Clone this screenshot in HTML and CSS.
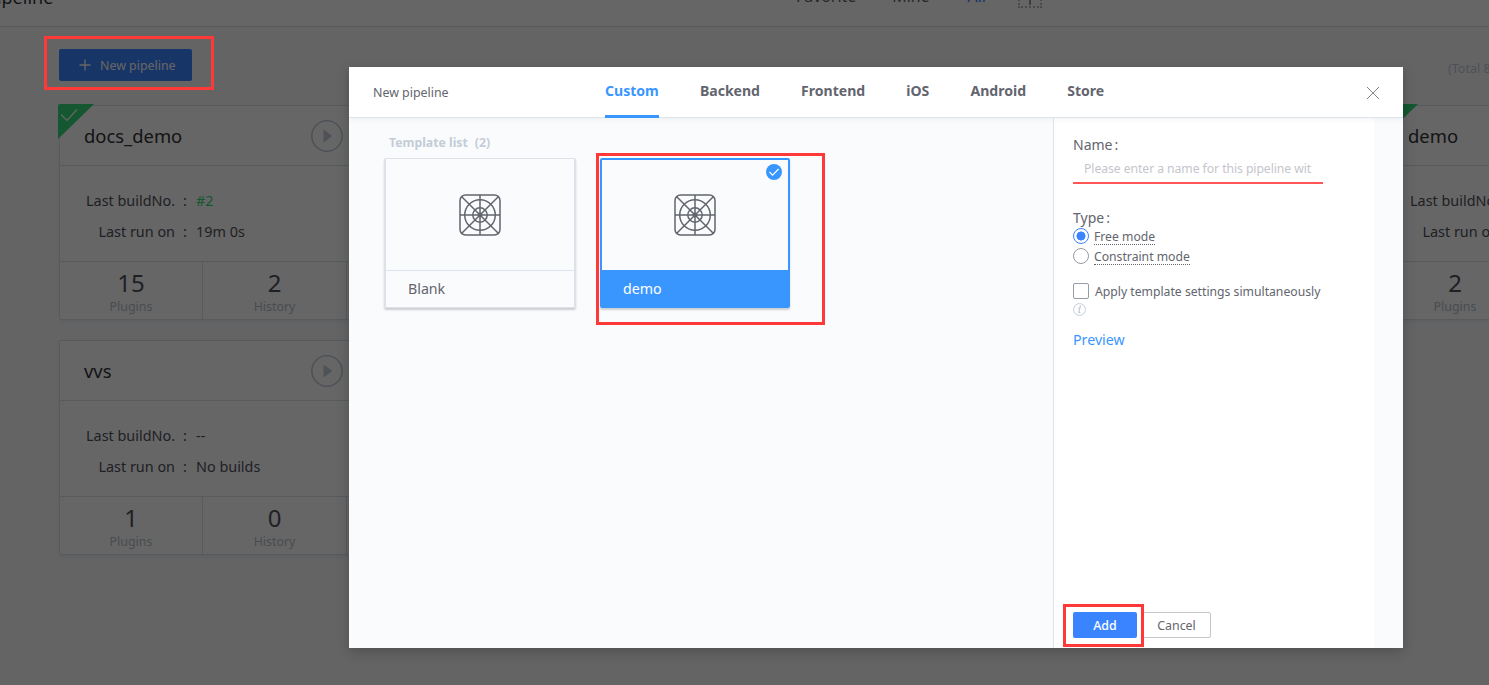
FILE: index.html
```html
<!DOCTYPE html>
<html lang="en">
<head>
<meta charset="utf-8">
<title>New pipeline</title>
<link rel="stylesheet" href="styles.css">
</head>
<body>
<svg class="defs" width="0" height="0">
  <symbol id="grid-icon" viewBox="0 0 42 42">
    <g fill="none" stroke="#63656e" stroke-width="1.5">
      <rect x="1" y="1" width="40" height="40" rx="5.5"/>
      <circle cx="21" cy="21" r="15.3"/>
      <circle cx="21" cy="21" r="7.2"/>
      <path d="M21 1v40M1 21h40M2.5 2.5l37 37M39.5 2.5l-37 37"/>
    </g>
    <circle cx="21" cy="21" r="2.4" fill="#63656e"/>
  </symbol>
  <symbol id="play-icon" viewBox="0 0 32 32">
    <circle cx="16" cy="16" r="15.2" fill="none" stroke="#c3cdd7" stroke-width="1.6"/>
    <path d="M12.5 10.2v11.6q0 .8.8.2l7.4-5.5q.6-.5 0-1L13.3 10q-.8-.6-.8.2z" fill="#c3cdd7"/>
  </symbol>
</svg>

<div class="page">
  <header class="topbar">
    <span class="topbar-title">Pipeline</span>
    <nav class="views">
      <span>Favorite</span><span>Mine</span><span class="view-active">All</span>
      <i class="view-add"></i>
    </nav>
  </header>
  <div class="toolbar">
    <button class="new-btn"><svg width="12" height="12" viewBox="0 0 12 12"><path d="M6 .5v11M.5 6h11" stroke="#fff" stroke-width="1.3"/></svg><span>New pipeline</span></button>
    <span class="total">(Total 8)</span>
  </div>
  <main class="cards">
    <section class="card">
      <svg class="corner" width="36" height="36" viewBox="0 0 36 36"><path d="M0 2q0-2 2-2h34L0 35z" fill="#34d97b"/><path d="M3 10.5l6 6 10-11" fill="none" stroke="#fff" stroke-width="1.2"/></svg>
      <div class="card-head"><h3>docs_demo</h3><svg class="play"><use href="#play-icon"/></svg></div>
      <dl class="card-body">
        <dt>Last buildNo.</dt><dd class="ok">#2</dd>
        <dt>Last run on</dt><dd>19m 0s</dd>
      </dl>
      <div class="card-foot"><div><b>15</b><span>Plugins</span></div><div><b>2</b><span>History</span></div><div></div></div>
    </section>
    <section class="card">
      <svg class="corner" width="36" height="36" viewBox="0 0 36 36"><path d="M0 2q0-2 2-2h34L0 35z" fill="#34d97b"/></svg>
      <div class="card-head"><h3>demo</h3></div>
      <dl class="card-body">
        <dt>Last buildNo.</dt><dd></dd>
        <dt>Last run on</dt><dd></dd>
      </dl>
      <div class="card-foot"><div><b>2</b><span>Plugins</span></div><div></div><div></div></div>
    </section>
    <section class="card">
      <div class="card-head"><h3>vvs</h3><svg class="play"><use href="#play-icon"/></svg></div>
      <dl class="card-body">
        <dt>Last buildNo.</dt><dd>--</dd>
        <dt>Last run on</dt><dd>No builds</dd>
      </dl>
      <div class="card-foot"><div><b>1</b><span>Plugins</span></div><div><b>0</b><span>History</span></div><div></div></div>
    </section>
  </main>
</div>

<div class="overlay">
  <div class="dialog">
    <header class="dialog-head">
      <span class="dialog-title">New pipeline</span>
      <nav class="tabs">
        <span class="tab-on">Custom</span><span>Backend</span><span>Frontend</span><span>iOS</span><span>Android</span><span>Store</span>
      </nav>
      <svg class="close" width="14" height="14" viewBox="0 0 14 14"><path d="M1 1l12 12M13 1L1 13" stroke="#8a8583" stroke-width="1"/></svg>
    </header>
    <div class="dialog-body">
      <section class="templates">
        <h4>Template list<span>(2)</span></h4>
        <div class="tiles">
          <div class="tile"><div class="tile-pic"><svg width="42" height="42"><use href="#grid-icon"/></svg></div><div class="tile-name">Blank</div></div>
          <div class="tile tile-on"><div class="tile-pic"><svg width="42" height="42"><use href="#grid-icon"/></svg></div><div class="tile-name">demo</div>
            <svg class="tick" width="16" height="16" viewBox="0 0 16 16"><circle cx="8" cy="8" r="8" fill="#3a96ff"/><path d="M3.5 8l3.1 3.2 6-6.2" fill="none" stroke="#fff" stroke-width="1.1"/></svg>
          </div>
        </div>
      </section>
      <aside class="form">
        <label class="label">Name<span class="colon">:</span></label>
        <div class="input"><span>Please enter a name for this pipeline within</span></div>
        <label class="label label-type">Type<span class="colon">:</span></label>
        <div class="option"><i class="radio radio-on"></i><span class="hint">Free mode</span></div>
        <div class="option"><i class="radio"></i><span class="hint">Constraint mode</span></div>
        <div class="option option-check"><i class="check"></i><span>Apply template settings simultaneously</span></div>
        <svg class="info" width="13" height="13" viewBox="0 0 13 13"><circle cx="6.5" cy="6.5" r="5.9" fill="none" stroke="#c3cdd7" stroke-width="1"/><path d="M5.2 5.3l1.7-.3-1.1 4.6q0 .5 1.5-.4" fill="none" stroke="#c3cdd7" stroke-width="1.2"/><circle cx="7.3" cy="3.4" r=".9" fill="#c3cdd7"/></svg>
        <a class="preview">Preview</a>
        <div class="actions"><button class="add">Add</button><button class="cancel">Cancel</button></div>
      </aside>
    </div>
  </div>
</div>

<div class="mark mark-new"></div>
<div class="mark mark-tile"></div>
<div class="mark mark-add"></div>
</body>
</html>
```
FILE: styles.css
```css
* { box-sizing: border-box; }
body { margin: 0; width: 1489px; height: 685px; overflow: hidden; position: relative; font: 14px "Noto Sans", "Open Sans", sans-serif; color: #63656e; }
.defs { position: absolute; }
h3, h4, dl, dd { margin: 0; font-weight: 400; }
button { font: inherit; border: 0; padding: 0; }
span, dt, dd, h3, a { white-space: nowrap; }

.page { height: 685px; background: #fafbfd; overflow: hidden; }
.topbar { height: 27px; background: #fff; border-bottom: 1px solid #dde4eb; display: flex; align-items: flex-start; line-height: 30px; }
.topbar-title { margin: -18px 0 0 -14px; width: 810px; font-size: 18px; color: #313238; }
.views { display: flex; margin-top: -19px; font-size: 15.9px; }
.views span { margin-right: 36px; }
.views .view-active { color: #3a84ff; margin: 0 31px 0 2px; }
.view-add { width: 24px; height: 24px; margin: 3px 0 0 1px; border: 2px dotted #b4b8c2; background: linear-gradient(#979ba5, #979ba5) 9px 4px / 2px 15px no-repeat; }
.toolbar { display: flex; justify-content: space-between; padding: 22px 0 0 59px; height: 78px; }
.new-btn { display: flex; align-items: center; width: 133px; height: 32px; background: #3a84ff; border-radius: 2px; color: #fff; font-size: 12.4px; padding-left: 20px; gap: 9px; }
.total { width: 41px; font-size: 12.5px; color: #c3cdd7; padding-top: 11px; }
.cards { display: grid; grid-template-columns: 310px 310px; column-gap: 1014px; row-gap: 20px; padding-left: 59px; }
.card { position: relative; width: 310px; height: 215px; background: #fff; border: 1px solid #dde4eb; border-radius: 2px; box-shadow: 0 2px 4px rgba(60,80,120,.08); }
.card:nth-child(3) { grid-column: 1; }
.corner { position: absolute; left: -2px; top: -2px; }
.card-head { display: flex; justify-content: space-between; align-items: center; height: 60px; padding: 0 25px 0 24px; border-bottom: 1px solid #dde4eb; }
.card-head h3 { font-size: 18.4px; color: #313238; }
.play { width: 32px; height: 32px; }
.card-body { display: grid; grid-template-columns: 115px 1fr; column-gap: 21px; grid-auto-rows: 31px; line-height: 31px; height: 96px; padding-top: 19px; font-size: 14.4px; border-bottom: 1px solid #dde4eb; color: #4f515b; }
.card-body dt { position: relative; text-align: right; }
.card-body dt::after { content: ":"; position: absolute; left: 123px; }
.card-body .ok { color: #34d97b; }
.card-foot { display: grid; grid-template-columns: 143px 144px 21px; height: 57px; text-align: center; }
.card-foot > div { border-right: 1px solid #dde4eb; }
.card-foot > div:last-child { border: 0; }
.card-foot b { display: block; font-weight: 400; font-size: 24px; line-height: 28px; padding-top: 7px; color: #4f515b; }
.card-foot span { display: block; font-size: 12.4px; line-height: 20px; color: #b3bfcb; }

.overlay { position: absolute; inset: 0; background: rgba(0,0,0,.6); padding: 67px 0 0 349px; }
.dialog { width: 1054px; height: 581px; background: #fff; display: flex; flex-direction: column; box-shadow: 0 4px 12px rgba(0,0,0,.2); }
.dialog-head { display: flex; height: 51px; flex: none; border-bottom: 1px solid #dde4eb; line-height: 48px; padding-left: 24px; box-shadow: 0 2px 5px rgba(51,60,72,.05); z-index: 1; }
.dialog-title { width: 232px; font-size: 12.4px; line-height: 51px; }
.tabs { display: flex; gap: 41.1px; width: 757px; font-weight: 700; font-size: 14.05px; }
.tab-on { color: #3a96ff; box-shadow: inset 0 -3px #3a96ff; height: 51px; }
.close { margin: 19px 0 0 4px; }
.dialog-body { display: flex; flex: 1; background: #fafbfd; }
.templates { width: 704px; padding: 15px 0 0 35px; }
.templates h4 { font-size: 12.25px; font-weight: 700; line-height: 20px; color: #c3cdd7; padding-left: 5px; margin-bottom: 5px; }
.templates h4 span { margin-left: 7px; }
.tiles { display: flex; gap: 24px; }
.tile { position: relative; width: 192px; height: 150px; border: 2px solid #dde1e8; border-top-width: 1px; border-bottom-width: 1px; border-radius: 2px; box-shadow: 0 2px 2px rgba(0,0,0,.18); }
.tile-pic { height: 112px; padding: 35px 0 0 73px; border-bottom: 1px solid #dde4eb; }
.tile-pic svg { display: block; }
.tile-name { line-height: 35px; padding-left: 22px; font-size: 14.2px; }
.tile-on { border: 2px solid #3a96ff; width: 190px; }
.tile-on .tile-pic { height: 110px; padding: 34px 0 0 72px; border: 0; }
.tile-on .tile-name { background: #3a96ff; color: #fff; height: 36px; line-height: 38px; padding-left: 21px; }
.tick { position: absolute; right: 6px; top: 4px; }
.form { display: flex; flex-direction: column; width: 321px; background: #fff; border-left: 1px solid #dde4eb; padding: 17px 0 0 19px; }
.label { font-size: 14px; line-height: 20px; }
.colon { margin-left: 2px; }
.input { width: 250px; height: 29px; border-bottom: 2px solid #ff5656; padding: 0 11px; line-height: 28px; font-size: 12.2px; color: #c4c6cc; overflow: hidden; }
.input span { display: block; overflow: hidden; letter-spacing: -.06px; }
.label-type { margin-top: 24px; height: 18px; }
.option { display: flex; align-items: center; height: 20px; gap: 5px; font-size: 12.2px; }
.radio { width: 16px; height: 16px; border: 1px solid #979ba5; border-radius: 50%; }
.radio-on { border-color: #3a84ff; background: radial-gradient(circle, #3a84ff 4.2px, transparent 4.8px); }
.hint { height: 18px; line-height: 19px; border-bottom: 1px dotted #63656e; }
.option-check { height: 16px; margin-top: 17px; gap: 6px; }
.check { width: 16px; height: 16px; border: 1px solid #979ba5; border-radius: 2px; }
.info { margin: 4px 0 0 0; flex: none; }
.preview { color: #3a96ff; font-size: 14.2px; line-height: 20px; margin-top: 14px; }
.actions { display: flex; margin-top: auto; padding-bottom: 10px; gap: 5px; font-size: 12.4px; }
.add { width: 64px; height: 26px; border-radius: 2px; background: #3a84ff; color: #fff; font-weight: 500; }
.cancel { width: 69px; height: 26px; border: 1px solid #c4c6cc; border-radius: 2px; background: #fff; color: #63656e; }

.mark { position: absolute; border: 3px solid #ff3838; }
.mark-new { left: 44px; top: 36px; width: 170px; height: 54px; }
.mark-tile { left: 596px; top: 153px; width: 229px; height: 172px; }
.mark-add { left: 1063px; top: 604px; width: 81px; height: 43px; }
```
